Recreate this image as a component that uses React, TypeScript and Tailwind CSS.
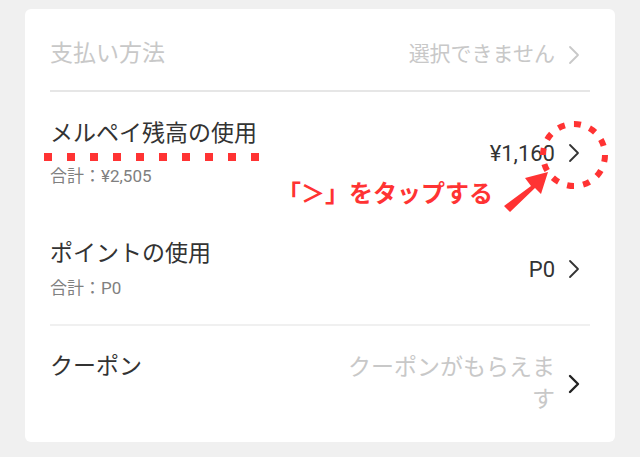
import React from "react";

const font = { fontFamily: "Roboto, 'Noto Sans CJK JP', sans-serif" };

function Chevron({ className = "", w = 1.8 }: { className?: string; w?: number }) {
  return (
    <svg width="14" height="22" viewBox="0 0 14 22" className={className} fill="none">
      <path d="M3 3l8 8-8 8" stroke="currentColor" strokeWidth={w} strokeLinecap="round" strokeLinejoin="round" />
    </svg>
  );
}

export default function App() {
  return (
    <div className="w-[640px] h-[457px] bg-[#f0f0f0] pt-[9px] px-[25px]" style={font}>
      <div className="relative bg-white rounded-md h-[433px] px-[25px] flex flex-col">
        {/* 支払い方法 */}
        <div className="h-[83px] pt-[10px] flex items-center justify-between border-b-2 border-[#e6e6e6]">
          <span className="text-[23px] text-[#c8c8c8]">支払い方法</span>
          <div className="flex items-center gap-[12px] mr-[9px] text-[#c8c8c8]">
            <span className="text-[21px]">選択できません</span>
            <Chevron />
          </div>
        </div>

        {/* メルペイ残高 */}
        <div className="h-[122px] flex items-center justify-between">
          <div className="flex flex-col">
            <span className="text-[23px] leading-[30px] text-[#333]">メルペイ残高の使用</span>
            <div className="flex gap-[15px] -ml-[6px] mt-[4px] mb-[4px]">
              {Array.from({ length: 10 }).map((_, i) => (
                <span key={i} className="w-[8px] h-[8px] bg-[#ff3333]" />
              ))}
            </div>
            <span className="text-[17px] leading-[22px] text-[#808080]">合計：¥2,505</span>
          </div>
          <div className="flex items-center gap-[12px] mr-[9px] text-[#333]">
            <span className="text-[22px]">¥1,160</span>
            <Chevron />
          </div>
        </div>

        {/* ポイント */}
        <div className="h-[112px] flex items-center justify-between border-b-2 border-[#f0f0f0]">
          <div className="flex flex-col gap-[8px]">
            <span className="text-[23px] leading-[30px] text-[#333]">ポイントの使用</span>
            <span className="text-[17px] leading-[22px] text-[#808080]">合計：P0</span>
          </div>
          <div className="flex items-center gap-[12px] mr-[9px] text-[#333]">
            <span className="text-[22px]">P0</span>
            <Chevron />
          </div>
        </div>

        {/* クーポン */}
        <div className="flex-1 flex items-start justify-between pt-[26px]">
          <span className="text-[23px] leading-[30px] text-[#333]">クーポン</span>
          <div className="flex items-center gap-[12px] mr-[9px]">
            <span className="w-[212px] text-right text-[23px] leading-[32px] text-[#c8c8c8]">クーポンがもらえます</span>
            <Chevron className="text-[#222]" w={2.4} />
          </div>
        </div>

        {/* annotation */}
        <span className="absolute left-[252px] top-[167px] text-[24px] font-bold text-[#ff3333]">「＞」をタップする</span>
        <svg className="absolute left-[470px] top-[100px]" width="130" height="110" viewBox="0 0 130 110">
          <circle cx="79" cy="46" r="31" fill="none" stroke="#ff3333" strokeWidth="6" strokeDasharray="7 9.2" />
          <path d="M9 97 L36 77 L30 69 L53 63 L46 85 L40 79 L15 103 Z" fill="#ff3333" />
        </svg>
      </div>
    </div>
  );
}
